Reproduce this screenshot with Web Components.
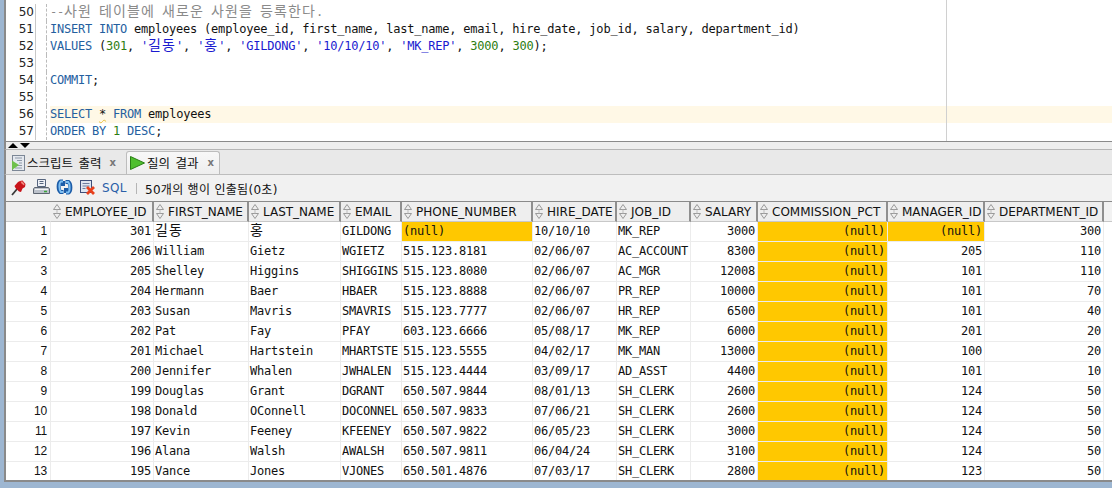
<!DOCTYPE html>
<html>
<head>
<meta charset="utf-8">
<style>
  html, body { margin: 0; height: 100%; overflow: hidden; }
  body { background: #9db6d1; width: 1112px; height: 488px; display: flex; flex-direction: column; padding-left: 4px; box-sizing: border-box; font-family: "Liberation Sans", "Noto Sans CJK KR", sans-serif; }
</style>
</head>
<body>
<sql-editor></sql-editor>
<split-bar></split-bar>
<result-tabs></result-tabs>
<result-toolbar></result-toolbar>
<data-grid></data-grid>

<script>
const MONO = '"DejaVu Sans Mono", "Noto Sans CJK KR", monospace';
const SANS = '"DejaVu Sans", "Noto Sans CJK KR", sans-serif';
const KO_STYLE = `.ko { font-family: "Noto Sans CJK KR", sans-serif; font-size: 14px; letter-spacing: 1.12px; line-height: 1px; }`;
// hangul takes two mono cells in the reference
const ko = s => s.replace(/[가-힣]+/g, m => `<span class="ko">${m}</span>`);

class SqlEditor extends HTMLElement {
  constructor() {
    super();
    const lines = [
      [50, `<span class="c">${ko('--사원 테이블에 새로운 사원을 등록한다.')}</span>`],
      [51, '<span class="k">INSERT INTO</span> employees (employee_id, first_name, last_name, email, hire_date, job_id, salary, department_id)'],
      [52, `<span class="k">VALUES</span> (<span class="n">301</span>, <span class="s">'${ko('길동')}'</span>, <span class="s">'${ko('홍')}'</span>, <span class="s">'GILDONG'</span>, <span class="s">'10/10/10'</span>, <span class="s">'MK_REP'</span>, <span class="n">3000</span>, <span class="n">300</span>);`],
      [53, ''],
      [54, '<span class="k">COMMIT</span>;'],
      [55, ''],
      [56, '<span class="k">SELECT</span> <span class="w">*</span> <span class="k">FROM</span> employees', true],
      [57, '<span class="k">ORDER BY</span> <span class="n">1</span> <span class="k">DESC</span>;']
    ];
    const rows = lines.map(([no, html, cur]) =>
      `<div class="line${cur ? ' cur' : ''}"><div class="no">${no}</div><div class="fold"></div><div class="code">${html}</div></div>`).join('');
    this.attachShadow({ mode: 'open' }).innerHTML = `
      <style>
        :host { display: block; height: 142px; flex: none; background: #fff; border-left: 2px solid #8a8a8a; border-bottom: 1px solid #8a8a8a; box-sizing: border-box; position: relative; overflow: hidden; }
        .wrap { padding-top: 4px; }
        .line { display: flex; height: 17px; line-height: 17px; }
        .no { width: 28px; flex: none; height: 17px; text-align: right; padding-right: 1px; font: 12px/17px ${SANS}; color: #222; border-right: 1px solid #c8c8c8; }
        .fold { width: 11px; flex: none; border-right: 1px dashed #bbb; box-sizing: border-box; margin-right: 3px; }
        .code { flex: 1; font: 12px/17px ${MONO}; letter-spacing: -0.22px; white-space: pre; color: #111; }
        .cur .code { background: #fff8e6; }
        .c { color: #8a8a8a; }
        .k { color: #24609f; }
        .n { color: #2e7d12; }
        .s { color: #1a1ad0; }
        .w { text-decoration: underline wavy #e8c040 1px; }
        .margin { position: absolute; left: 940px; top: 0; bottom: 0; width: 1px; background: #d0d0d0; }
        ${KO_STYLE}
      </style>
      <div class="wrap">${rows}</div>
      <div class="margin"></div>`;
  }
}

class SplitBar extends HTMLElement {
  constructor() {
    super();
    this.attachShadow({ mode: 'open' }).innerHTML = `
      <style>
        :host { display: flex; height: 8px; flex: none; background: #eeeeee; border-left: 2px solid #8a8a8a; border-bottom: 1px solid #b5b5b5; padding-left: 2px; align-items: center; gap: 2px; box-sizing: border-box; }
        svg { display: block; }
      </style>
      <svg width="10" height="5"><path d="M5 0 L10 5 H0Z" fill="#000"/></svg>
      <svg width="10" height="5"><path d="M0 0 H10 L5 5Z" fill="#000"/></svg>`;
  }
}

class ResultTabs extends HTMLElement {
  constructor() {
    super();
    this.attachShadow({ mode: 'open' }).innerHTML = `
      <style>
        :host { display: flex; height: 24px; flex: none; background: #e9e9e9; border-left: 2px solid #8a8a8a; padding-left: 2px; align-items: flex-end; box-sizing: border-box; font: 12.5px ${SANS}; color: #111; word-spacing: 1.5px; }
        .tab { display: flex; align-items: center; height: 22px; box-sizing: border-box; padding-bottom: 1px; }
        .a { width: 118px; padding-left: 3px; }
        .b { width: 94px; height: 23px; background: linear-gradient(#f8f8f8, #eeeeee); border: 1px solid #bdbdbd; border-bottom: 0; border-radius: 3px 3px 0 0; padding-left: 3px; }
        .a span:first-of-type { margin-left: -1px; }
        .x { font: bold 10px ${SANS}; color: #777; margin-left: 8px; }
        .b .x { margin-left: 9px; }
        svg { flex: none; display: block; }
      </style>
      <div class="tab a">
        <svg width="17" height="17" viewBox="0 0 17 17"><rect x="1.5" y="1.5" width="12" height="15" fill="#e4e8ee" stroke="#7c8796"/><path d="M4 4h7M6 6.500h5M8 9h3M6 11.500h5M4 14h7" stroke="#8e99a8"/><path d="M1 6.500 L8 11 L1 16Z" fill="#6fc04c"/></svg>
        <span>스크립트 출력</span><span class="x">x</span>
      </div>
      <div class="tab b">
        <svg width="17" height="16" viewBox="0 0 17 16"><path d="M.5 1.500 L14.500 8 L.5 14.500Z" fill="#4fbf2e" stroke="#2a7f16"/></svg>
        <span>질의 결과</span><span class="x">x</span>
      </div>`;
  }
}

class ResultToolbar extends HTMLElement {
  constructor() {
    super();
    this.attachShadow({ mode: 'open' }).innerHTML = `
      <style>
        :host { display: flex; height: 27px; flex: none; background: #f1f1f1; border-left: 2px solid #8a8a8a; border-top: 1px solid #bdbdbd; align-items: center; padding-left: 5px; box-sizing: border-box; font: 12px ${SANS}; color: #111; }
        svg { flex: none; display: block; margin: -2px 6px 0 0; }
        .sql { color: #2b5fa8; letter-spacing: .4px; }
        .sep { width: 1px; height: 11px; background: #b5b5b5; margin: 0 8px 0 9px; }
        .msg { letter-spacing: .3px; }
      </style>
      <svg width="16" height="17" viewBox="0 0 16 17"><path d="M1 16 L6.500 9.500" stroke="#3a3a3a" stroke-width="1.800"/><path d="M7 3 L3.500 7 L4.500 9 L8 12.500 L10 13 L11.500 9.500 L14 8 L14.500 5 L11.500 1.500 L9 2Z" fill="#c8141a"/><path d="M9.500 2.500 L11.500 2.500 L13.500 5 L13 6.500 L10.500 4.500Z" fill="#f2867c"/></svg>
      <svg width="17" height="16" viewBox="0 0 17 16"><path d="M4.500 .5 H12.500 V7.500 H4.500Z" fill="#eef1f6" stroke="#56657e"/><path d="M6.500 2.500h4M6.500 4.500h4" stroke="#56657e"/><path d="M1.500 8.500 H15.500 L16.500 10 V14.500 H.5 V10Z" fill="#bcc2cb" stroke="#5d6570"/><path d="M2 10.500h13" stroke="#f2f2f2"/><path d="M11 12.500h3" stroke="#3aa33a" stroke-width="1.500"/></svg>
      <svg width="17" height="16" viewBox="0 0 17 16"><g fill="none" stroke-linecap="butt"><path d="M7 2.500 H4.500 C2 4 2 11 4.500 13 H7.500 M7 2 L7 7" stroke="#1c5ca8" stroke-width="4"/><path d="M10 13.500 H12.500 C15 12 15 5 12.500 3 H9.500 M10 14 L10 9" stroke="#1c5ca8" stroke-width="4"/><path d="M7 2.500 H4.800 C2.800 4 2.800 11 4.800 13 H7" stroke="#7ec0f4" stroke-width="1.800"/><path d="M10 13.500 H12.200 C14.200 12 14.200 5 12.200 3 H10" stroke="#7ec0f4" stroke-width="1.800"/></g></svg>
      <svg width="17" height="16" viewBox="0 0 17 16"><rect x="1.500" y="1.500" width="11" height="12" fill="#dfe5f0" stroke="#3f4f7a"/><path d="M3.500 4.500h7M3.500 7h7M3.500 9.500h3" stroke="#6f7da0"/><path d="M8 8 L15 15 M15 8 L8 15" stroke="#e8401c" stroke-width="2.800"/></svg>
      <span class="sql">SQL</span><span class="sep"></span><span class="msg">50개의 행이 인출됨(0초)</span>`;
  }
}

// rowno col, then the table's columns; widths read off the header separators
const COLS = [
  ['', 45], ['EMPLOYEE_ID', 103, 1], ['FIRST_NAME', 95], ['LAST_NAME', 92], ['EMAIL', 61], ['PHONE_NUMBER', 131],
  ['HIRE_DATE', 84], ['JOB_ID', 74], ['SALARY', 67, 1], ['COMMISSION_PCT', 130, 1], ['MANAGER_ID', 97, 1], ['DEPARTMENT_ID', 119, 1]
];
const N = '(null)';
const DATA = [
  [301, '길동', '홍', 'GILDONG', N, '10/10/10', 'MK_REP', 3000, N, N, 300],
  [206, 'William', 'Gietz', 'WGIETZ', '515.123.8181', '02/06/07', 'AC_ACCOUNT', 8300, N, 205, 110],
  [205, 'Shelley', 'Higgins', 'SHIGGINS', '515.123.8080', '02/06/07', 'AC_MGR', 12008, N, 101, 110],
  [204, 'Hermann', 'Baer', 'HBAER', '515.123.8888', '02/06/07', 'PR_REP', 10000, N, 101, 70],
  [203, 'Susan', 'Mavris', 'SMAVRIS', '515.123.7777', '02/06/07', 'HR_REP', 6500, N, 101, 40],
  [202, 'Pat', 'Fay', 'PFAY', '603.123.6666', '05/08/17', 'MK_REP', 6000, N, 201, 20],
  [201, 'Michael', 'Hartstein', 'MHARTSTE', '515.123.5555', '04/02/17', 'MK_MAN', 13000, N, 100, 20],
  [200, 'Jennifer', 'Whalen', 'JWHALEN', '515.123.4444', '03/09/17', 'AD_ASST', 4400, N, 101, 10],
  [199, 'Douglas', 'Grant', 'DGRANT', '650.507.9844', '08/01/13', 'SH_CLERK', 2600, N, 124, 50],
  [198, 'Donald', 'OConnell', 'DOCONNEL', '650.507.9833', '07/06/21', 'SH_CLERK', 2600, N, 124, 50],
  [197, 'Kevin', 'Feeney', 'KFEENEY', '650.507.9822', '06/05/23', 'SH_CLERK', 3000, N, 124, 50],
  [196, 'Alana', 'Walsh', 'AWALSH', '650.507.9811', '06/04/24', 'SH_CLERK', 3100, N, 124, 50],
  [195, 'Vance', 'Jones', 'VJONES', '650.501.4876', '07/03/17', 'SH_CLERK', 2800, N, 123, 50]
];
const SORT = `<svg width="8" height="15" viewBox="0 0 8 15"><path d="M4 .5 L7.500 5.500 H.5Z M4 14.500 L.5 9.500 H7.500Z" fill="#eee" stroke="#999"/><path d="M4 5.500 V9.500" stroke="#bbb"/></svg>`;

class DataGrid extends HTMLElement {
  constructor() {
    super();
    const tracks = COLS.map(c => c[1] + 'px').join(' ') + ' 1fr';
    const head = COLS.map(([t]) => t ? `<div class="h">${SORT}<span>${t}</span></div>` : '<div class="h corner"></div>').join('') + '<div class="h end"></div>';
    const body = DATA.map((row, i) => {
      const cells = row.map((v, j) => {
        const right = COLS[j + 1][2];
        return `<div class="d${right ? ' r' : ''}${v === N ? ' nul' : ''}">${ko(String(v))}</div>`;
      }).join('');
      return `<div class="d no">${i + 1}</div>${cells}<div class="d end"></div>`;
    }).join('');
    this.attachShadow({ mode: 'open' }).innerHTML = `
      <style>
        :host { display: block; flex: none; height: 281px; background: #fff; border: 2px solid #8a8a8a; border-right: 0; border-top: 1px solid #8a8a8a; box-sizing: border-box; overflow: hidden; }
        .grid { display: grid; grid-template-columns: ${tracks}; grid-auto-rows: 20px; }
        .h { display: flex; align-items: center; gap: 4px; padding-left: 2px; background: #eeeeee; border-right: 2px solid #8f8f8f; border-bottom: 1px solid #c8c8c8; box-sizing: border-box; font: 12px ${SANS}; color: #111; white-space: nowrap; overflow: hidden; }
        .h svg { flex: none; }
        .corner { border-right: 1px solid #eee; }
        .h.end { border-right: 0; background: #f2f2f2; }
        .d { font: 12px/19px ${MONO}; letter-spacing: -0.22px; color: #111; padding: 0 2px 0 1px; border-right: 1px solid #ececec; border-bottom: 1px solid #ececec; box-sizing: border-box; white-space: nowrap; }
        .d.end { border-right: 0; border-bottom: 0; }
        .r { text-align: right; }
        .no { text-align: right; padding-right: 3px; font-family: "Liberation Sans", sans-serif; }
        .nul { background: #ffc800; }
        ${KO_STYLE}
      </style>
      <div class="grid">${head}${body}</div>`;
  }
}

customElements.define('sql-editor', SqlEditor);
customElements.define('split-bar', SplitBar);
customElements.define('result-tabs', ResultTabs);
customElements.define('result-toolbar', ResultToolbar);
customElements.define('data-grid', DataGrid);
</script>
</body>
</html>
